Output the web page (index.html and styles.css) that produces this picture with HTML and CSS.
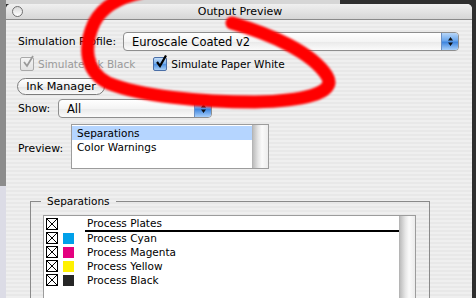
FILE: index.html
```html
<!DOCTYPE html>
<html lang="en">
<head>
    <meta charset="UTF-8">
    <title>Output Preview</title>
    <link rel="stylesheet" href="styles.css">
</head>
<body>
    <div class="window">
        <div class="titlebar">
            <span class="close-btn"></span>
            <span class="title">Output Preview</span>
        </div>
        <div class="content">
            <div class="row profile-row">
                <span class="label profile-label">Simulation Profile:</span>
                <div class="popup popup-wide">
                    <span class="popup-text">Euroscale Coated v2</span>
                    <span class="popup-arrows">
                        <svg width="7" height="11" viewBox="0 0 7 11"><path d="M3.5 1 L6 4.5 L1 4.5 Z M3.5 10 L6 6.5 L1 6.5 Z" fill="#111"/></svg>
                    </span>
                </div>
            </div>

            <div class="row check-row">
                <span class="check disabled">
                    <span class="box">
                        <svg width="14" height="14" viewBox="0 0 14 14"><path d="M3 7 L6 11 L12 1" fill="none" stroke="#9a9a9a" stroke-width="1.8"/></svg>
                    </span>
                    Simulate Ink Black
                </span>
                <span class="check">
                    <span class="box checked">
                        <svg width="14" height="14" viewBox="0 0 14 14"><path d="M3 7 L6 11 L12 0.5" fill="none" stroke="#000" stroke-width="2.2"/></svg>
                    </span>
                    Simulate Paper White
                </span>
            </div>

            <button class="pill-btn">Ink Manager</button>

            <div class="row show-row">
                <span class="label show-label">Show:</span>
                <div class="popup popup-show">
                    <span class="popup-text">All</span>
                    <span class="popup-arrows">
                        <svg width="7" height="11" viewBox="0 0 7 11"><path d="M3.5 1 L6 4.5 L1 4.5 Z M3.5 10 L6 6.5 L1 6.5 Z" fill="#111"/></svg>
                    </span>
                </div>
            </div>

            <div class="row preview-row">
                <span class="label preview-label">Preview:</span>
                <div class="listbox">
                    <div class="list-items">
                        <div class="list-item selected">Separations</div>
                        <div class="list-item">Color Warnings</div>
                    </div>
                    <div class="scrollbar"></div>
                </div>
            </div>

            <fieldset class="group">
                <legend>Separations</legend>
                <div class="sep-list">
                    <div class="sep-items">
                        <div class="sep-row header">
                            <span class="xbox"></span>
                            <span class="swatch none"></span>
                            <span class="sep-name">Process Plates</span>
                        </div>
                        <div class="sep-row">
                            <span class="xbox"></span>
                            <span class="swatch cyan"></span>
                            <span class="sep-name">Process Cyan</span>
                        </div>
                        <div class="sep-row">
                            <span class="xbox"></span>
                            <span class="swatch magenta"></span>
                            <span class="sep-name">Process Magenta</span>
                        </div>
                        <div class="sep-row">
                            <span class="xbox"></span>
                            <span class="swatch yellow"></span>
                            <span class="sep-name">Process Yellow</span>
                        </div>
                        <div class="sep-row">
                            <span class="xbox"></span>
                            <span class="swatch black"></span>
                            <span class="sep-name">Process Black</span>
                        </div>
                    </div>
                    <div class="scrollbar"></div>
                </div>
            </fieldset>
        </div>
    </div>

    <!-- hand drawn marker loop over the dialog -->
    <svg class="scribble" width="476" height="298" viewBox="0 0 476 298">
        <defs>
            <filter id="soft"><feGaussianBlur stdDeviation="0.9"/></filter>
        </defs>
        <path d="M232 23 C270 34 312 52 327 76 C338 94 300 101 255 102 C200 102 140 96 108 83 C84 71 84 45 94 23 C102 7 118 -2 140 -7"
              fill="none" stroke="#ff0000" stroke-width="13" stroke-linecap="round" stroke-linejoin="round" filter="url(#soft)"/>
    </svg>
</body>
</html>
```

FILE: styles.css
```css
body {
    margin: 0;
    width: 476px;
    height: 298px;
    overflow: hidden;
    position: relative;
    font-family: "DejaVu Sans", sans-serif;
    font-size: 10.8px;
    color: #000;
    background:
        linear-gradient(#8c8c8c, #8c8c8c) 0 0 / 6px 186px no-repeat,
        linear-gradient(#dcdce6, #dcdce6) 0 186px / 6px 112px no-repeat,
        linear-gradient(#d6d6d6, #d6d6d6) 0 0 / 340px 4px no-repeat,
        #2f2f2f;
}

.window {
    margin: 4px 0 0 6px;
    width: 466px;
    height: 294px;
    border-radius: 5px 5px 0 0;
    overflow: hidden;
    background: repeating-linear-gradient(#efefef 0 2px, #e8e8e8 2px 4px);
}

.titlebar {
    height: 15px;
    border-bottom: 1px solid #8a8a8a;
    background: linear-gradient(#f0f0f0, #d6d6d6);
    display: flex;
    align-items: center;
}

.close-btn {
    width: 9px;
    height: 9px;
    margin-left: 6px;
    border-radius: 50%;
    border: 1px solid #6f6f6f;
    background: linear-gradient(#d8d8d8, #ffffff);
}

.title {
    flex: 1;
    text-align: center;
    margin-right: 15px;
    font-size: 11px;
    line-height: 15px;
}

.content {
    padding: 12px 13px 0 12px;
}

.row {
    display: flex;
    align-items: center;
}

.label {
    flex-shrink: 0;
}

.profile-row {
    height: 19px;
}

.profile-label {
    width: 105px;
}

.popup {
    display: flex;
    align-items: center;
    height: 17px;
    border: 1px solid #8e8e8e;
    border-radius: 4px;
    background: linear-gradient(#ffffff, #f4f4f4 50%, #e9e9e9 51%, #fbfbfb);
    overflow: hidden;
}

.popup-wide {
    flex: 1;
}

.popup-text {
    flex: 1;
    padding-left: 8px;
    font-size: 11.5px;
}

.popup-arrows {
    width: 16px;
    height: 17px;
    display: flex;
    align-items: center;
    justify-content: center;
    border-left: 1px solid #6a8fc4;
    background: linear-gradient(#b7d6f8, #6aa6ec 45%, #3f86df 55%, #a9d0fa);
}

.check-row {
    margin-top: 5px;
    height: 16px;
    padding-left: 2px;
}

.check {
    display: flex;
    align-items: center;
    gap: 4px;
    margin-right: 18px;
    font-size: 10.5px;
}

.check.disabled {
    color: #9a9a9a;
}

.box {
    width: 12px;
    height: 12px;
    border: 1px solid #a9a9a9;
    border-radius: 2px;
    background: linear-gradient(#f4f4f4, #e2e2e2);
    position: relative;
}

.box svg {
    position: absolute;
    left: 0;
    top: -3px;
}

.box.checked {
    border-color: #4b6fa7;
    background: linear-gradient(#c5def9, #6ea9ec 50%, #4a8fe2 51%, #a8cff7);
}

.pill-btn {
    display: block;
    margin-top: 6px;
    margin-left: -1px;
    width: 88px;
    height: 17px;
    padding: 0;
    border: 1px solid #7c7c7c;
    border-radius: 9px;
    background: linear-gradient(#ffffff, #f1f1f1 50%, #e4e4e4 51%, #fafafa);
    font-family: "DejaVu Sans", sans-serif;
    font-size: 11.2px;
    color: #000;
}

.show-row {
    margin-top: 4px;
    height: 19px;
}

.show-label {
    width: 40px;
}

.popup-show {
    width: 152px;
}

.preview-row {
    margin-top: 6px;
    align-items: flex-end;
}

.preview-label {
    width: 53px;
    margin-bottom: 14px;
}

.listbox {
    display: flex;
    width: 196px;
    height: 43px;
    border: 1px solid #9c9c9c;
    background: #fff;
}

.list-items {
    flex: 1;
    padding-top: 1px;
}

.list-item {
    height: 14px;
    line-height: 14px;
    padding-left: 5px;
    font-size: 10.5px;
}

.list-item.selected {
    background-color: #b5d5ff;
}

.scrollbar {
    width: 15px;
    border-left: 1px solid #b5b5b5;
    background: linear-gradient(to right, #bdbdbd, #e6e6e6 35%, #fafafa 60%, #ececec);
}

.group {
    box-sizing: border-box;
    margin: 25px 0 0 12px;
    width: 400px;
    min-width: 0;
    height: 120px;
    padding: 7px 13px 0 12px;
    border: 1px solid #8a8a8a;
    border-bottom: none;
}

.group legend {
    margin-left: -2px;
    padding: 0 6px;
    line-height: 14px;
    font-size: 10.5px;
}

.sep-list {
    display: flex;
    height: 90px;
    border: 1px solid #9c9c9c;
    border-bottom: none;
    background: #fff;
}

.sep-items {
    flex: 1;
    padding-top: 1px;
}

.sep-row {
    display: flex;
    align-items: center;
    height: 14px;
}

.sep-row.header .sep-name {
    border-bottom: 2px solid #000;
    height: 13px;
    line-height: 13px;
}

.xbox {
    width: 10px;
    height: 10px;
    margin-left: 2px;
    border: 1px solid #000;
    background:
        linear-gradient(45deg, transparent calc(50% - 0.6px), #000 50%, transparent calc(50% + 0.6px)),
        linear-gradient(-45deg, transparent calc(50% - 0.6px), #000 50%, transparent calc(50% + 0.6px)),
        #fff;
}

.swatch {
    width: 11px;
    height: 11px;
    margin-left: 5px;
}

.swatch.none { background: transparent; }
.swatch.cyan { background: #00a0e9; }
.swatch.magenta { background: #e4007f; }
.swatch.yellow { background: #fff100; }
.swatch.black { background: #262626; }

.sep-name {
    flex: 1;
    margin-left: 11px;
    padding-left: 2px;
    font-size: 10.5px;
}

.scribble {
    position: absolute;
    left: 0;
    top: 0;
    pointer-events: none;
}
```
